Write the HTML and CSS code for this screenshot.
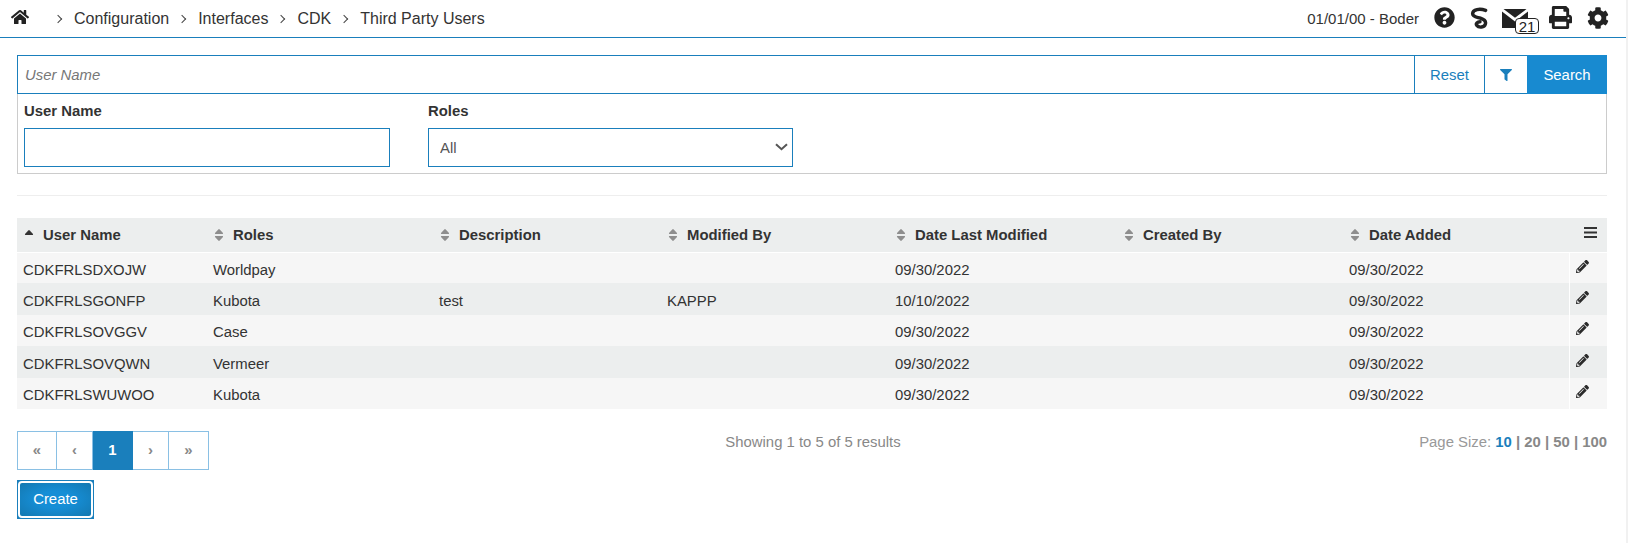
FILE: index.html
```html
<!DOCTYPE html>
<html lang="en">
<head>
<meta charset="utf-8">
<title>Third Party Users</title>
<link rel="stylesheet" href="styles.css">
</head>
<body>
<div class="page">
  <header class="topbar">
    <nav class="crumbs">
      <svg class="home" viewBox="0 0 576 512"><path d="M280.37 148.26L96 300.11V464a16 16 0 0 0 16 16l112.06-.29a16 16 0 0 0 15.92-16V368a16 16 0 0 1 16-16h64a16 16 0 0 1 16 16v95.64a16 16 0 0 0 16 16.05L464 480a16 16 0 0 0 16-16V300L295.67 148.26a12.19 12.19 0 0 0-15.3 0zM571.6 251.47L488 182.56V44.05a12 12 0 0 0-12-12h-56a12 12 0 0 0-12 12v72.61L318.47 43a48 48 0 0 0-61 0L4.34 251.47a12 12 0 0 0-1.6 16.9l25.5 31A12 12 0 0 0 45.15 301l235.22-193.74a12.19 12.19 0 0 1 15.3 0L530.9 301a12 12 0 0 0 16.9-1.6l25.5-31a12 12 0 0 0-1.7-16.93z"/></svg>
      <span class="chev first"></span><span>Configuration</span>
      <span class="chev"></span><span>Interfaces</span>
      <span class="chev"></span><span>CDK</span>
      <span class="chev"></span><span>Third Party Users</span>
    </nav>
    <div class="tools">
      <span class="who">01/01/00 - Boder</span>
      <svg class="ico help" viewBox="0 0 512 512"><path d="M504 256c0 136.997-111.043 248-248 248S8 392.997 8 256C8 119.083 119.043 8 256 8s248 111.083 248 248zM262.655 90c-54.497 0-89.255 22.957-116.549 63.758-3.536 5.286-2.353 12.415 2.715 16.258l34.699 26.31c5.205 3.947 12.621 3.008 16.665-2.122 17.864-22.658 30.113-35.797 57.303-35.797 20.429 0 45.698 13.148 45.698 32.958 0 14.976-12.363 22.667-32.534 33.976C247.128 238.528 216 254.941 216 296v4c0 6.627 5.373 12 12 12h56c6.627 0 12-5.373 12-12v-1.333c0-28.462 83.186-29.647 83.186-106.667 0-58.002-60.165-102-116.531-102zM256 338c-25.365 0-46 20.635-46 46 0 25.364 20.635 46 46 46s46-20.636 46-46c0-25.365-20.635-46-46-46z"/></svg>
      <svg class="ico ess" viewBox="0 0 18 22"><path d="M15.6 3.4C10 1.2 2.6 2.2 2.6 6.8C2.6 10 7.4 10.2 10.4 11.2C14.2 12.4 16.2 14.2 15.4 17C14.4 20.6 8.8 21 6.8 18.4C5.4 16.4 7.4 14.8 10 14.8" fill="none" stroke-width="3.4" stroke-linecap="round"/></svg>
      <span class="mail">
        <svg class="env" viewBox="0 0 26 19"><path d="M1.5 0H24.5L13 8.8ZM0 2.4L13 12.4L26 2.4V19H0Z"/></svg>
        <span class="badge">21</span>
      </span>
      <svg class="ico print" viewBox="0 0 512 512"><path d="M448 192V77.25c0-8.49-3.37-16.62-9.37-22.63L393.37 9.37c-6-6-14.14-9.37-22.63-9.37H96C78.33 0 64 14.33 64 32v160c-35.35 0-64 28.65-64 64v112c0 8.84 7.16 16 16 16h48v96c0 17.67 14.33 32 32 32h320c17.67 0 32-14.33 32-32v-96h48c8.84 0 16-7.16 16-16V256c0-35.35-28.65-64-64-64zm-64 256H128v-96h256v96zm0-224H128V64h192v48c0 8.84 7.16 16 16 16h48v96zm48 72c-13.25 0-24-10.75-24-24 0-13.26 10.75-24 24-24s24 10.74 24 24c0 13.25-10.75 24-24 24z"/></svg>
      <svg class="ico cog" viewBox="0 0 512 512"><path d="M487.4 315.7l-42.6-24.6c4.3-23.2 4.3-47 0-70.2l42.6-24.6c4.9-2.8 7.1-8.6 5.5-14-11.1-35.6-30-67.8-54.7-94.6-3.8-4.1-10-5.1-14.8-2.3L380.8 110c-17.9-15.4-38.5-27.3-60.8-35.1V25.8c0-5.6-3.9-10.5-9.4-11.7-36.7-8.2-74.3-7.8-109.2 0-5.5 1.2-9.4 6.1-9.4 11.7V75c-22.2 7.9-42.8 19.8-60.8 35.1L88.7 85.5c-4.9-2.8-11-1.9-14.8 2.3-24.7 26.7-43.6 58.9-54.7 94.6-1.7 5.4.6 11.2 5.5 14L67.3 221c-4.3 23.2-4.3 47 0 70.2l-42.6 24.6c-4.9 2.8-7.1 8.6-5.5 14 11.1 35.6 30 67.8 54.7 94.6 3.8 4.1 10 5.1 14.8 2.3l42.6-24.6c17.9 15.4 38.5 27.3 60.8 35.1v49.2c0 5.6 3.9 10.5 9.4 11.7 36.7 8.2 74.3 7.8 109.2 0 5.5-1.2 9.4-6.1 9.4-11.7v-49.2c22.2-7.9 42.8-19.8 60.8-35.1l42.6 24.6c4.9 2.8 11 1.9 14.8-2.3 24.7-26.7 43.6-58.9 54.7-94.6 1.5-5.5-.7-11.3-5.6-14.1zM256 336c-44.1 0-80-35.9-80-80s35.9-80 80-80 80 35.9 80 80-35.9 80-80 80z"/></svg>
    </div>
  </header>

  <main class="content">
    <section class="search">
      <div class="searchbar">
        <input class="quick" type="text" placeholder="User Name">
        <button class="sbtn reset" type="button">Reset</button>
        <button class="sbtn filter" type="button"><svg viewBox="0 0 512 512"><path d="M487.976 0H24.028C2.71 0-8.047 25.866 7.058 40.971L192 225.941V432c0 7.831 3.821 15.17 10.237 19.662l80 55.98C298.02 518.69 320 507.493 320 487.98V225.941l184.947-184.97C520.021 25.896 509.338 0 487.976 0z"/></svg></button>
        <button class="sbtn go" type="button">Search</button>
      </div>
      <div class="fields">
        <div class="field">
          <label class="lbl">User Name</label>
          <input class="ctl" type="text">
        </div>
        <div class="field">
          <label class="lbl">Roles</label>
          <div class="selwrap">
            <select class="ctl sel"><option>All</option></select>
            <svg class="caret" viewBox="0 0 13 8"><path d="M1 1.2L6.5 6.2L12 1.2" fill="none" stroke-width="2"/></svg>
          </div>
        </div>
      </div>
    </section>
    <hr class="rule">

    <table class="grid">
      <colgroup>
        <col class="c1"><col class="c2"><col class="c3"><col class="c3"><col class="c3"><col class="c2"><col class="c2"><col class="c4">
      </colgroup>
      <thead>
        <tr>
          <th><span class="th"><svg class="sort" viewBox="0 0 10 14"><path class="on" d="M1 6L4.3 2.4Q5 1.7 5.7 2.4L9 6Q9.3 6.8 8.6 7H1.4Q.7 6.8 1 6Z"/></svg>User Name</span></th>
          <th><span class="th"><svg class="sort" viewBox="0 0 10 14"><path d="M1 5L4.3 1.4Q5 .7 5.7 1.4L9 5Q9.3 5.8 8.6 6H1.4Q.7 5.8 1 5ZM1 9L4.3 12.6Q5 13.3 5.7 12.6L9 9Q9.3 8.2 8.6 8H1.4Q.7 8.2 1 9Z"/></svg>Roles</span></th>
          <th><span class="th"><svg class="sort" viewBox="0 0 10 14"><path d="M1 5L4.3 1.4Q5 .7 5.7 1.4L9 5Q9.3 5.8 8.6 6H1.4Q.7 5.8 1 5ZM1 9L4.3 12.6Q5 13.3 5.7 12.6L9 9Q9.3 8.2 8.6 8H1.4Q.7 8.2 1 9Z"/></svg>Description</span></th>
          <th><span class="th"><svg class="sort" viewBox="0 0 10 14"><path d="M1 5L4.3 1.4Q5 .7 5.7 1.4L9 5Q9.3 5.8 8.6 6H1.4Q.7 5.8 1 5ZM1 9L4.3 12.6Q5 13.3 5.7 12.6L9 9Q9.3 8.2 8.6 8H1.4Q.7 8.2 1 9Z"/></svg>Modified By</span></th>
          <th><span class="th"><svg class="sort" viewBox="0 0 10 14"><path d="M1 5L4.3 1.4Q5 .7 5.7 1.4L9 5Q9.3 5.8 8.6 6H1.4Q.7 5.8 1 5ZM1 9L4.3 12.6Q5 13.3 5.7 12.6L9 9Q9.3 8.2 8.6 8H1.4Q.7 8.2 1 9Z"/></svg>Date Last Modified</span></th>
          <th><span class="th"><svg class="sort" viewBox="0 0 10 14"><path d="M1 5L4.3 1.4Q5 .7 5.7 1.4L9 5Q9.3 5.8 8.6 6H1.4Q.7 5.8 1 5ZM1 9L4.3 12.6Q5 13.3 5.7 12.6L9 9Q9.3 8.2 8.6 8H1.4Q.7 8.2 1 9Z"/></svg>Created By</span></th>
          <th><span class="th"><svg class="sort" viewBox="0 0 10 14"><path d="M1 5L4.3 1.4Q5 .7 5.7 1.4L9 5Q9.3 5.8 8.6 6H1.4Q.7 5.8 1 5ZM1 9L4.3 12.6Q5 13.3 5.7 12.6L9 9Q9.3 8.2 8.6 8H1.4Q.7 8.2 1 9Z"/></svg>Date Added</span></th>
          <th class="menu"><svg class="bars" viewBox="0 0 13 11"><path d="M0 0H13V2H0ZM0 4.5H13V6.5H0ZM0 9H13V11H0Z"/></svg></th>
        </tr>
      </thead>
      <tbody>
        <tr><td>CDKFRLSDXOJW</td><td>Worldpay</td><td></td><td></td><td>09/30/2022</td><td></td><td>09/30/2022</td><td class="act"><svg class="pen" viewBox="0 0 512 512"><path d="M497.9 142.1l-46.1 46.1c-4.7 4.7-12.3 4.7-17 0l-111-111c-4.7-4.7-4.7-12.3 0-17l46.1-46.1c18.7-18.7 49.1-18.7 67.9 0l60.1 60.1c18.8 18.7 18.8 49.1 0 67.9zM284.2 99.8L21.6 362.4.4 483.9c-2.9 16.4 11.4 30.6 27.8 27.8l121.5-21.3 262.6-262.6c4.7-4.7 4.7-12.3 0-17l-111-111c-4.8-4.7-12.4-4.7-17.1 0zM124.1 339.9c-5.5-5.5-5.5-14.3 0-19.8l154-154c5.5-5.5 14.3-5.5 19.8 0s5.5 14.3 0 19.8l-154 154c-5.5 5.5-14.3 5.5-19.8 0zM88 424h48v36.3l-64.5 11.3-31.1-31.1L51.7 376H88v48z"/></svg></td></tr>
        <tr><td>CDKFRLSGONFP</td><td>Kubota</td><td>test</td><td>KAPPP</td><td>10/10/2022</td><td></td><td>09/30/2022</td><td class="act"><svg class="pen" viewBox="0 0 512 512"><path d="M497.9 142.1l-46.1 46.1c-4.7 4.7-12.3 4.7-17 0l-111-111c-4.7-4.7-4.7-12.3 0-17l46.1-46.1c18.7-18.7 49.1-18.7 67.9 0l60.1 60.1c18.8 18.7 18.8 49.1 0 67.9zM284.2 99.8L21.6 362.4.4 483.9c-2.9 16.4 11.4 30.6 27.8 27.8l121.5-21.3 262.6-262.6c4.7-4.7 4.7-12.3 0-17l-111-111c-4.8-4.7-12.4-4.7-17.1 0zM124.1 339.9c-5.5-5.5-5.5-14.3 0-19.8l154-154c5.5-5.5 14.3-5.5 19.8 0s5.5 14.3 0 19.8l-154 154c-5.5 5.5-14.3 5.5-19.8 0zM88 424h48v36.3l-64.5 11.3-31.1-31.1L51.7 376H88v48z"/></svg></td></tr>
        <tr><td>CDKFRLSOVGGV</td><td>Case</td><td></td><td></td><td>09/30/2022</td><td></td><td>09/30/2022</td><td class="act"><svg class="pen" viewBox="0 0 512 512"><path d="M497.9 142.1l-46.1 46.1c-4.7 4.7-12.3 4.7-17 0l-111-111c-4.7-4.7-4.7-12.3 0-17l46.1-46.1c18.7-18.7 49.1-18.7 67.9 0l60.1 60.1c18.8 18.7 18.8 49.1 0 67.9zM284.2 99.8L21.6 362.4.4 483.9c-2.9 16.4 11.4 30.6 27.8 27.8l121.5-21.3 262.6-262.6c4.7-4.7 4.7-12.3 0-17l-111-111c-4.8-4.7-12.4-4.7-17.1 0zM124.1 339.9c-5.5-5.5-5.5-14.3 0-19.8l154-154c5.5-5.5 14.3-5.5 19.8 0s5.5 14.3 0 19.8l-154 154c-5.5 5.5-14.3 5.5-19.8 0zM88 424h48v36.3l-64.5 11.3-31.1-31.1L51.7 376H88v48z"/></svg></td></tr>
        <tr><td>CDKFRLSOVQWN</td><td>Vermeer</td><td></td><td></td><td>09/30/2022</td><td></td><td>09/30/2022</td><td class="act"><svg class="pen" viewBox="0 0 512 512"><path d="M497.9 142.1l-46.1 46.1c-4.7 4.7-12.3 4.7-17 0l-111-111c-4.7-4.7-4.7-12.3 0-17l46.1-46.1c18.7-18.7 49.1-18.7 67.9 0l60.1 60.1c18.8 18.7 18.8 49.1 0 67.9zM284.2 99.8L21.6 362.4.4 483.9c-2.9 16.4 11.4 30.6 27.8 27.8l121.5-21.3 262.6-262.6c4.7-4.7 4.7-12.3 0-17l-111-111c-4.8-4.7-12.4-4.7-17.1 0zM124.1 339.9c-5.5-5.5-5.5-14.3 0-19.8l154-154c5.5-5.5 14.3-5.5 19.8 0s5.5 14.3 0 19.8l-154 154c-5.5 5.5-14.3 5.5-19.8 0zM88 424h48v36.3l-64.5 11.3-31.1-31.1L51.7 376H88v48z"/></svg></td></tr>
        <tr><td>CDKFRLSWUWOO</td><td>Kubota</td><td></td><td></td><td>09/30/2022</td><td></td><td>09/30/2022</td><td class="act"><svg class="pen" viewBox="0 0 512 512"><path d="M497.9 142.1l-46.1 46.1c-4.7 4.7-12.3 4.7-17 0l-111-111c-4.7-4.7-4.7-12.3 0-17l46.1-46.1c18.7-18.7 49.1-18.7 67.9 0l60.1 60.1c18.8 18.7 18.8 49.1 0 67.9zM284.2 99.8L21.6 362.4.4 483.9c-2.9 16.4 11.4 30.6 27.8 27.8l121.5-21.3 262.6-262.6c4.7-4.7 4.7-12.3 0-17l-111-111c-4.8-4.7-12.4-4.7-17.1 0zM124.1 339.9c-5.5-5.5-5.5-14.3 0-19.8l154-154c5.5-5.5 14.3-5.5 19.8 0s5.5 14.3 0 19.8l-154 154c-5.5 5.5-14.3 5.5-19.8 0zM88 424h48v36.3l-64.5 11.3-31.1-31.1L51.7 376H88v48z"/></svg></td></tr>
      </tbody>
    </table>

    <div class="pager-row">
      <div class="pager">
        <a class="wide">«</a><a>‹</a><a class="cur">1</a><a>›</a><a class="wide">»</a>
      </div>
      <div class="count">Showing 1 to 5 of 5 results</div>
      <div class="size">Page Size: <b class="sel-size">10</b> <b>| 20 | 50 | 100</b></div>
    </div>
    <button class="create" type="button"><span>Create</span></button>
  </main>
</div>
</body>
</html>
```
FILE: styles.css
```css
* { box-sizing: border-box; }
html, body { margin: 0; height: 100%; overflow: hidden; }
body {
  font-family: "Liberation Sans", Arial, sans-serif;
  font-size: 14.88px;
  color: #333;
  background: #fff;
}
.page {
  height: 543px;
  border-right: 2px solid #f1f1f1;
}
.topbar {
  height: 38px;
  border-bottom: 1px solid #1a7fbc;
  display: flex;
  align-items: center;
  justify-content: space-between;
  padding: 0 17px 0 11px;
  font-size: 16px;
}
.crumbs { display: flex; align-items: center; }
.home { width: 18px; height: 16px; fill: #222; margin-top: -4px; }
.chev {
  width: 6px;
  height: 6px;
  border-top: 1px solid #444;
  border-right: 1px solid #444;
  transform: rotate(45deg);
  margin: 1px 13px 0 10px;
}
.chev.first { margin-left: 26px; }
.tools { display: flex; align-items: center; margin-top: -2px; }
.who { margin-right: 15px; font-size: 15px; margin-top: 2px; }
.ico { fill: #222; display: block; }
.help { width: 21px; height: 21px; }
.ess { width: 18px; height: 22px; margin-left: 15px; fill: none; stroke: #222; }
.mail { position: relative; display: block; width: 37px; height: 24px; margin-left: 14px; }
.env { position: absolute; left: 0; top: 3px; width: 26px; height: 19px; fill: #222; }
.badge {
  position: absolute;
  left: 13px;
  top: 12px;
  width: 24px;
  height: 16px;
  border: 1px solid #222;
  border-radius: 4px;
  background: #fff;
  color: #222;
  font-size: 15px;
  line-height: 15px;
  text-align: center;
}
.print { width: 23px; height: 23px; margin-left: 10px; }
.cog { width: 22px; height: 22px; margin-left: 15px; }

.content { padding: 17px 19px 0 17px; }
.search { border: 1px solid #ccc; border-top: 0; height: 119px; width: 1590px; }
.searchbar {
  display: flex;
  height: 39px;
  margin: 0 -1px;
  border: 1px solid #1a7fbc;
  border-right: 0;
}
.quick {
  flex: 1;
  border: 0;
  outline: 0;
  padding: 0 7px;
  font: italic 14.88px "Liberation Sans", Arial, sans-serif;
  color: #333;
}
.quick::placeholder { color: #777; opacity: 1; }
.sbtn {
  border: 0;
  border-left: 1px solid #1a7fbc;
  background: #fff;
  color: #1a7fbc;
  font: 14.88px "Liberation Sans", Arial, sans-serif;
  padding: 0;
  display: flex;
  align-items: center;
  justify-content: center;
}
.reset { width: 70px; }
.filter { width: 43px; }
.filter svg { width: 12px; height: 12px; fill: #1a7fbc; }
.go { width: 80px; background: #188ad0; color: #fff; border-left: 0; margin: -1px 0; }
.fields { display: grid; grid-template-columns: 366px 365px; column-gap: 38px; padding: 8px 0 0 6px; }
.field { display: flex; flex-direction: column; }
.lbl { font-weight: bold; height: 26px; line-height: 18px; color: #333; }
.ctl {
  width: 100%;
  height: 39px;
  border: 1px solid #1a7fbc;
  background: #fff;
  outline: 0;
  border-radius: 0;
  font: 14.88px "Liberation Sans", Arial, sans-serif;
  color: #555;
  padding: 0 11px;
}
.selwrap { position: relative; }
.sel { appearance: none; -webkit-appearance: none; display: block; }
.caret {
  position: absolute;
  right: 5px;
  top: 15px;
  width: 13px;
  height: 8px;
  stroke: #555;
  pointer-events: none;
}
.rule { border: 0; border-top: 1px solid #eee; margin: 21px 0 22px; width: 1590px; }

.grid { border-collapse: collapse; table-layout: fixed; width: 1590px; }
.c1 { width: 190px; }
.c2 { width: 226px; }
.c3 { width: 228px; }
.c4 { width: 38px; }
.grid th {
  height: 34px;
  background: #eceeee;
  text-align: left;
  padding: 0 6px;
  color: #333;
  border-bottom: 1px solid #fff;
}
.th { display: flex; align-items: center; white-space: nowrap; }
.sort { width: 10px; height: 14px; margin: 0 9px 0 1px; fill: #8e8e8e; flex: none; }
.sort .on { fill: #333; }
.menu { text-align: left; }
.bars { display: block; width: 13px; height: 11px; fill: #333; margin: -4px 0 0 9px; }
.grid td { height: 31.4px; padding: 4px 6px 0; background: #f6f6f6; white-space: nowrap; }
.grid tbody tr:nth-child(even) td { background: #eceeee; }
.grid td.act { border-left: 1px solid #fff; padding: 0; }
.pen { display: block; width: 13px; height: 13px; fill: #2b2b2b; margin: -3px 0 0 6px; }

.pager-row {
  width: 1590px;
  display: grid;
  grid-template-columns: 1fr auto 1fr;
  align-items: start;
  margin-top: 22px;
}
.pager { display: flex; height: 39px; }
.pager a {
  width: 36px;
  border: 1px solid #8ac0e4;
  border-left: 0;
  display: flex;
  align-items: center;
  justify-content: center;
  color: #888;
  font-weight: bold;
}
.pager a.wide { width: 40px; }
.pager a:first-child { border-left: 1px solid #8ac0e4; }
.pager a.cur { width: 40px; background: #1a7fbc; border-color: #1a7fbc; color: #fff; }
.count { color: #888; line-height: 20px; padding: 1px 0 0 2px; }
.size { color: #999; text-align: right; line-height: 20px; padding-top: 1px; }
.size b { color: #888; }
.size .sel-size { color: #1a7fbc; }
.create {
  display: block;
  margin-top: 10px;
  padding: 1px;
  width: 77px;
  height: 39px;
  border: 0;
  background: #1a7fbc;
}
.create span {
  display: flex;
  align-items: center;
  justify-content: center;
  height: 100%;
  border: 2px solid #fff;
  border-radius: 4px;
  background: radial-gradient(ellipse at center, #168ed6 35%, #1478b0 100%);
  color: #fff;
  font: 14.88px "Liberation Sans", Arial, sans-serif;
}
```
